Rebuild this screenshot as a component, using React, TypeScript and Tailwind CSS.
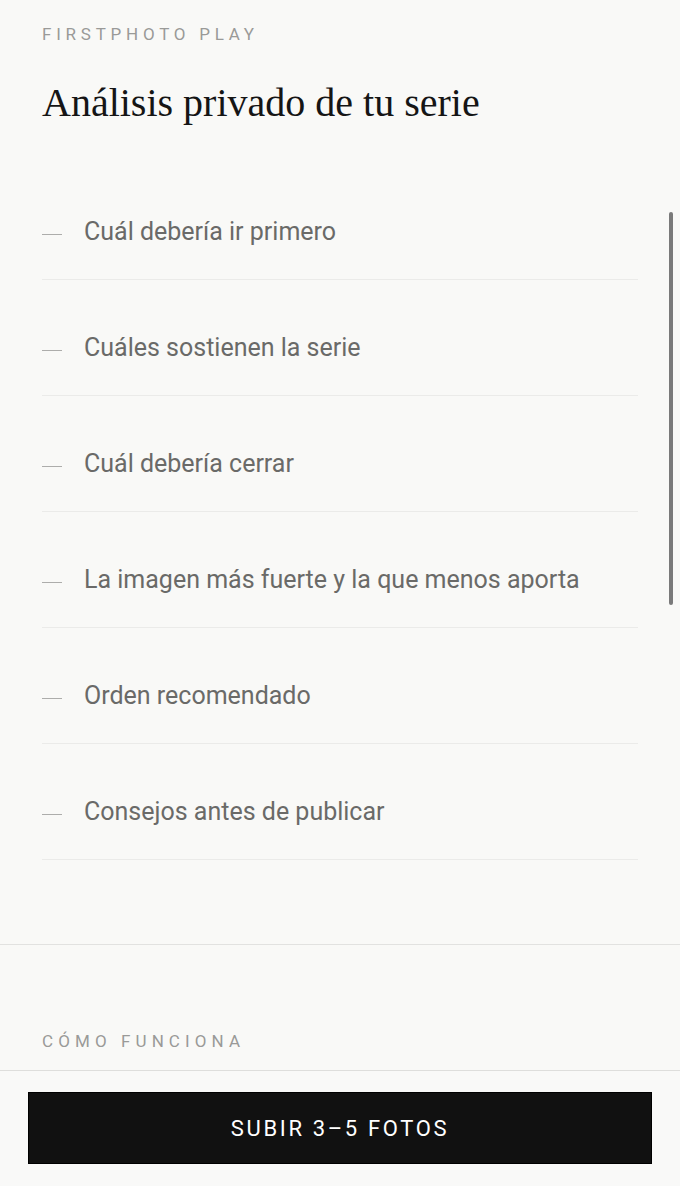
import React from 'react';

const items = [
    'Cuál debería ir primero',
    'Cuáles sostienen la serie',
    'Cuál debería cerrar',
    'La imagen más fuerte y la que menos aporta',
    'Orden recomendado',
    'Consejos antes de publicar',
];

const sans = { fontFamily: 'Roboto, "Liberation Sans", sans-serif' };

const App: React.FC = () => {
    return (
        <div className="relative h-[1186px] w-full flex flex-col overflow-hidden bg-[#f9f9f7]" style={sans}>
            <main className="flex-1 overflow-hidden">
                <section className="px-[42px] pt-[24px] pb-[84px] border-b border-[#e2e2e0]">
                    <p className="text-[17px] leading-[20px] tracking-[0.28em] text-[#9a9a98]">FIRSTPHOTO PLAY</p>
                    <h1 className="mt-[35px] text-[40px] leading-[48px] text-[#151515] font-['Liberation_Serif',serif]">
                        Análisis privado de tu serie
                    </h1>
                    <ul className="mt-[37px]">
                        {items.map((item) => (
                            <li key={item} className="flex items-center pt-[52px] pb-[32px] border-b border-[#ebebe9]">
                                <span className="w-[20px] h-[1.5px] bg-[#adadab] mt-[6px] mr-[22px] shrink-0" />
                                <span className="text-[25px] leading-[31px] text-[#6a6a68]">{item}</span>
                            </li>
                        ))}
                    </ul>
                </section>
                <section className="px-[42px] pt-[86px]">
                    <p className="text-[17px] leading-[20px] tracking-[0.3em] text-[#9a9a98]">CÓMO FUNCIONA</p>
                </section>
            </main>
            <footer className="h-[116px] shrink-0 border-t border-[#dededc] bg-[#f9f9f8] px-[28px] pt-[21px]">
                <button className="w-full h-[72px] bg-[#111111] border border-black text-white text-[22px] tracking-[0.12em]">
                    SUBIR 3–5 FOTOS
                </button>
            </footer>
            {/* scroll indicator */}
            <div className="absolute left-[669px] top-[212px] w-[4px] h-[393px] rounded-full bg-[#7a7a7a]" />
        </div>
    );
};

export default App;
